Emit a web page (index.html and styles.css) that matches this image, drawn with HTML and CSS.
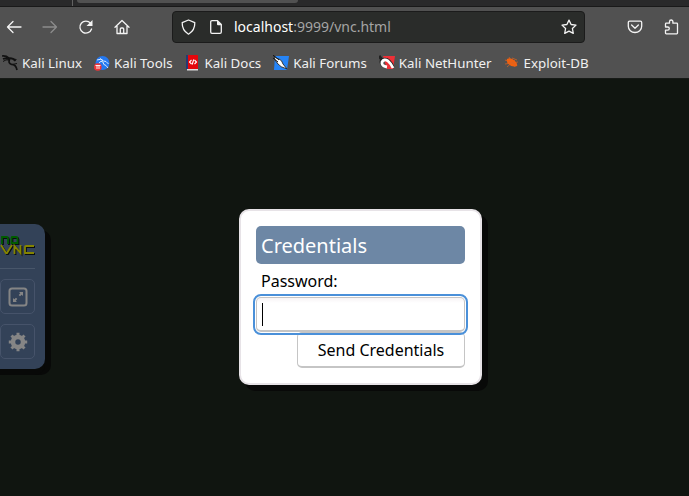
FILE: index.html
```html
<!DOCTYPE html>
<html lang="en">
<head>
<meta charset="utf-8">
<title>noVNC</title>
<link rel="stylesheet" href="styles.css">
</head>
<body>
<div class="tabs"><span class="tab-sep"></span><span class="tab"></span></div>
<header class="chrome">
  <nav class="toolbar">
    <div class="nav-buttons">
      <svg viewBox="0 0 16 16"><path d="M15 8H1.5M7 2.5L1.5 8L7 13.5"/></svg>
      <svg class="dim" viewBox="0 0 16 16"><path d="M1 8H14.5M9 2.5L14.5 8L9 13.5"/></svg>
      <svg viewBox="0 0 16 16"><path d="M13.6 10A6 6 0 1 1 12.5 4.2"/><path class="fill" d="M14.5 1v6h-6z"/></svg>
      <svg viewBox="0 0 16 16"><path d="M1 8.2L8 1.5L15 8.2M3 7v7.5h10V7M6.3 14V10q0-1 1-1h1.4q1 0 1 1v4"/></svg>
    </div>
    <div class="urlbar">
      <svg viewBox="0 0 16 16"><path d="M7.500 1L13.800 3.600C14 9 12.100 12.600 7.500 15.200C2.900 12.600 1 9 1.200 3.600Z"/></svg>
      <svg class="page-icon" viewBox="0 0 16 16"><path d="M8.500 1.700H3q-1.300 0-1.300 1.300v10q0 1.300 1.300 1.300h8q1.300 0 1.300-1.300V5.500z"/><path class="fill" d="M8 1.500L12.800 6.300H9q-1 0-1-1z"/></svg>
      <span class="url"><b>localhost</b>:9999/vnc.html</span>
      <svg class="star" viewBox="0 0 16 16"><path d="M8 1.100L10.100 5.500L15 6.100L11.400 9.500L12.300 14.400L8 12.100L3.700 14.400L4.600 9.500L1 6.100L5.900 5.500Z"/></svg>
    </div>
    <div class="actions">
      <svg viewBox="0 0 16 16"><path d="M2.700 2.200h10.600q1.400 0 1.400 1.400v3.600a6.700 6.300 0 0 1-13.400 0V3.600q0-1.400 1.400-1.400zM4.600 6L8 9.200L11.400 6"/></svg>
      <svg viewBox="0 0 16 16"><path d="M1.500 8V5q0-.8.800-.8H5.500V2.700a1.500 1.500 0 0 1 3.400 0v1.500h3.800q.8 0 .8.800v9q0 .8-.8.800H2.300q-.8 0-.8-.8V11.200h2.200a1.600 1.600 0 0 0 0-3.200z"/></svg>
    </div>
  </nav>
  <nav class="bookmarks">
    <a><svg class="dragon" viewBox="0 0 16 16"><path d="M0 1Q4 .5 7 3.200Q11 2.800 13.500 6M1 4Q4 2.500 7.500 4.500Q6 8.500 9.500 9.300Q14 9.300 15 15"/><path class="wing" d="M1 6.500Q4 4 7 5M11 4l3.500.5M10 9.500l5-1M4 1.500l3 2"/></svg>Kali Linux</a>
    <a><svg viewBox="0 0 16 16"><circle cx="8.500" cy="8" r="7" fill="#2478f0"/><path d="M3 5Q7 3 9.500 6Q12 5.500 14.500 9M5 8Q7 5 9 7Q9 10 12 10.500L14 13M6 3.500l3 2" fill="none" stroke="#d8e9ff" stroke-width="1"/><circle cx="3.800" cy="12" r="3.800" fill="#ef3537"/><path d="M1.500 10.500h5M3 10.500v3.500M5 10.500v3.500" stroke="#fff" stroke-width=".9"/></svg>Kali Tools</a>
    <a><svg viewBox="0 0 16 16"><path d="M1 0h12v14H1z" fill="#e5060b"/><path d="M1 0h2v14H1z" fill="#243a75"/><path d="M2 14h11v1.500H2z" fill="#ddd"/><path d="M6.500 5L4.500 7l2 2M9.500 5l2 2-2 2M8.700 4.500l-1.500 5" fill="none" stroke="#fff" stroke-width="1.100"/></svg>Kali Docs</a>
    <a><svg viewBox="0 0 16 16"><path d="M2 1h14l-2 14H1z" fill="#2584f7"/><path d="M1 1Q4 4 6 4Q9 5 10 9L14 14Q7 12 5 9L2 5Z" fill="#fff" stroke="#222" stroke-width=".9"/><path d="M0 0l6 5M0 3l5 4" stroke="#151515"/></svg>Kali Forums</a>
    <a><svg viewBox="0 0 16 16"><path d="M4 1h12l-2 13H8z" fill="#ee3037"/><path d="M0 1l3 4M4 11Q0 6 4 4.500Q10 2.500 14 12" fill="none" stroke="#202020" stroke-width="3"/><path d="M8 12Q2 11 3 7Q5 3.500 9 6Q12 8.500 14 13" fill="none" stroke="#fff" stroke-width="2.800"/></svg>Kali NetHunter</a>
    <a><svg viewBox="0 0 16 16"><path d="M3 4Q7 2 11 6Q14 9 13 11Q8 12.500 5 9.500Q2 7 3 4z" fill="#f2600d"/><path d="M1 5l12 5M1 9l13-2M5 2l6 10M3 12l8-7M8 3l5 2" stroke="#df6420" stroke-width=".7"/></svg>Exploit-DB</a>
  </nav>
</header>
<main class="viewport">
  <aside class="control-bar">
    <svg class="logo" viewBox="0 0 36 24"><g class="shade" transform="translate(1 1)"><path d="M2 11V4h4.500q1.500 0 1.500 1.500V11M12 4h4q1.500 0 1.500 1.500V10h-6V5z"/><path d="M1 12l5 8h1l5-8M14.500 21v-8l6 7v-8M34 13h-8q-1 0-1 1v6h9"/></g><path class="no" d="M2 11V4h4.500q1.500 0 1.500 1.500V11M12 4h4q1.500 0 1.500 1.500V10h-6V5z"/><path class="vnc" d="M1 12l5 8h1l5-8M14.500 21v-8l6 7v-8M34 13h-8q-1 0-1 1v6h9"/></svg>
    <hr>
    <button class="tool" aria-label="Fullscreen"><svg viewBox="0 0 20 20"><rect x="1.500" y="1.500" width="17" height="17" rx="2.500"/><path class="fill" d="M11 5h4v4l-1.300-1.300-1.700 1.600-1.300-1.300L12.300 6.300zM5 11v4h4l-1.300-1.300L9.300 12 8 10.700l-1.700 1.600z"/></svg></button>
    <button class="tool" aria-label="Settings"><svg viewBox="0 0 20 20"><circle class="gear" cx="10" cy="10" r="5"/><path class="teeth" d="M10 .8v3.500M10 15.700v3.500M.8 10h3.500M15.700 10h3.500M3.500 3.500l2.500 2.500M14 14l2.500 2.500M3.500 16.500L6 14M14 6l2.500-2.500"/></svg></button>
  </aside>
  <form class="dialog">
    <h1>Credentials</h1>
    <label for="password">Password:</label>
    <div class="field" id="password"><span class="caret"></span></div>
    <button type="button" class="send">Send Credentials</button>
  </form>
</main>
</body>
</html>
```

FILE: styles.css
```css
* { box-sizing: border-box; }
body {
  margin: 0;
  width: 689px;
  height: 496px;
  overflow: hidden;
  background: #101510;
  font-family: "Noto Sans", sans-serif;
}
svg { display: block; flex: none; }
.tabs {
  height: 7px;
  display: flex;
  background: #29292a;
  border-bottom: 1px solid #191919;
}
.tab-sep { width: 1px; margin: 0 4px 0 72px; background: #626262; }
.tab {
  width: 221px;
  height: 3px;
  background: #515151;
  border-radius: 0 0 3px 3px;
}
.chrome {
  height: 72px;
  background: #515151;
  border-bottom: 1px solid #171a17;
}
.toolbar { height: 40px; display: flex; align-items: center; }
.toolbar svg {
  width: 16px;
  height: 16px;
  fill: none;
  stroke: #f4f4f4;
  stroke-width: 1.3;
  stroke-linecap: round;
  stroke-linejoin: round;
}
.toolbar .fill { fill: #f4f4f4; stroke: none; }
.toolbar .dim { stroke: #8c8c8c; }
.nav-buttons { display: flex; gap: 20px; width: 172px; padding-left: 6px; }
.urlbar {
  width: 413px;
  height: 32px;
  display: flex;
  align-items: center;
  padding: 0 7px 0 8px;
  background: #2a2c2a;
  border: 1px solid #1b1b1b;
  border-radius: 4px;
}
.page-icon { margin-left: 12px; }
.url { margin-left: 9px; font-size: 14px; line-height: 18px; color: #a4a4a4; }
.url b { font-weight: 400; color: #fff; }
.star { margin-left: auto; }
.actions { display: flex; gap: 21px; margin-left: 42px; }
.bookmarks {
  display: flex;
  align-items: center;
  gap: 12px;
  height: 31px;
  padding-left: 2px;
  font-size: 13.333px;
  color: #f0f0f0;
}
.bookmarks a { display: flex; align-items: center; gap: 4px; white-space: nowrap; }
.bookmarks svg { width: 16px; height: 16px; }
.dragon { fill: none; stroke: #111; stroke-width: 1.7; }
.dragon .wing { stroke-width: 1; }

.viewport {
  display: grid;
  grid-template-columns: 45px 243px;
  column-gap: 194px;
  align-items: start;
}
.control-bar {
  height: 145px;
  margin-top: 145px;
  padding-top: 9px;
  background: #334258;
  border-radius: 0 10px 10px 0;
  box-shadow: 0 6px 0 #080908, 6px 6px 0 #080908;
}
.logo { width: 36px; height: 24px; fill: none; stroke-width: 1.8; }
.logo .shade { stroke: #0a0e10; }
.logo .no { stroke: #005c00; }
.logo .vnc { stroke: #848400; }
.control-bar hr { width: 35px; height: 1px; margin: 11px 0 10px; border: 0; background: #48566a; }
.tool {
  display: grid;
  place-items: center;
  width: 35px;
  height: 35px;
  margin: 0 0 10px;
  padding: 0;
  background: none;
  border: 1px solid #46536a;
  border-radius: 5px;
}
.tool svg { width: 20px; height: 20px; fill: none; stroke: #858585; stroke-width: 2; }
.tool .fill { fill: #858585; stroke: none; }
.tool .gear { stroke-width: 4.5; }
.tool .teeth { stroke-width: 3; }

.dialog {
  display: flex;
  flex-direction: column;
  height: 176px;
  margin: 130px 0 0;
  padding: 15px;
  background: #fff;
  border: 2px solid #e7e3e7;
  border-radius: 10px;
  box-shadow: 6px 6px 0 #080908;
  font-size: 16px;
  color: #000;
}
.dialog h1 {
  height: 38px;
  margin: 0;
  padding-left: 5px;
  background: #6d87a5;
  border-radius: 5px;
  color: #fff;
  font-size: 20px;
  font-weight: 400;
  line-height: 40px;
}
.dialog label { height: 33px; padding-left: 5px; line-height: 34px; }
.field {
  height: 35px;
  padding: 5px;
  background: linear-gradient(#f7f3f5, #fff 5px);
  border: 1px solid #c5c5c5;
  border-bottom-width: 2px;
  border-radius: 5px;
  outline: 2px solid #4a90d9;
  outline-offset: 1px;
  z-index: 1;
}
.caret { display: block; width: 1px; height: 23px; background: #000; }
.send {
  align-self: flex-end;
  width: 168px;
  height: 36px;
  padding: 1px 0 0;
  background: #fff;
  border: 1px solid #c5c5c5;
  border-bottom-width: 2px;
  border-radius: 5px;
  color: #000;
  font: inherit;
}
```
